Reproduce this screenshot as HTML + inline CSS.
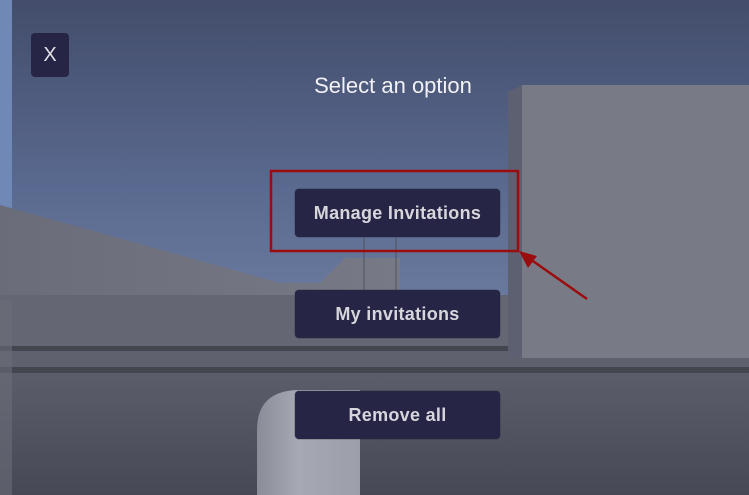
<!DOCTYPE html>
<html><head><style>
body{margin:0;width:749px;height:495px;overflow:hidden;position:relative;font-family:"Liberation Sans",sans-serif;background:#4f5878}
.a{position:absolute}
.btn{position:absolute;left:295px;width:205px;height:48px;background:#262545;border-radius:4px;color:#d6d6dc;font-weight:bold;font-size:18px;letter-spacing:0.3px;display:flex;align-items:center;justify-content:center;box-shadow:0 0 1px #111}
</style></head><body>
<svg class="a" style="left:0;top:0" width="749" height="495">
<defs>
<linearGradient id="sky" x1="0" y1="0" x2="0" y2="1"><stop offset="0" stop-color="#434d6b"/><stop offset="0.6" stop-color="#59688e"/><stop offset="1" stop-color="#6a7a9e"/></linearGradient>
<linearGradient id="low" x1="0" y1="0" x2="0" y2="1"><stop offset="0" stop-color="#5b5e6a"/><stop offset="1" stop-color="#464955"/></linearGradient>
<linearGradient id="wall" x1="0" y1="0" x2="1" y2="0"><stop offset="0" stop-color="#6a6d79"/><stop offset="1" stop-color="#777a86"/></linearGradient>
<linearGradient id="pil" x1="0" y1="0" x2="1" y2="0"><stop offset="0" stop-color="#8a8c98"/><stop offset="0.4" stop-color="#a6a8b3"/><stop offset="1" stop-color="#9c9eaa"/></linearGradient>
</defs>
<rect width="749" height="300" fill="url(#sky)"/>
<rect x="0" y="0" width="12" height="300" fill="#6f88b5"/>
<polygon points="0,205 280,283 320,283 345,258 400,258 400,300 0,315" fill="url(#wall)"/>
<rect x="0" y="295" width="749" height="55" fill="#646773"/>
<rect x="0" y="346" width="508" height="5" fill="#43464f"/>
<rect x="0" y="351" width="749" height="17" fill="#5f626e"/>
<rect x="0" y="367" width="749" height="6" fill="#43464f"/>
<rect x="0" y="373" width="749" height="122" fill="url(#low)"/>
<rect x="0" y="300" width="12" height="195" fill="#6a6c78" opacity="0.6"/>
<polygon points="508,92 522,85 522,358 508,358" fill="#5c6070"/>
<rect x="522" y="85" width="227" height="273" fill="#787b86"/>
<line x1="364" y1="238" x2="364" y2="290" stroke="#50535e"/>
<line x1="396" y1="238" x2="396" y2="290" stroke="#50535e"/>
<path d="M257,495 L257,430 Q257,390 300,390 L360,390 L360,495 Z" fill="url(#pil)"/>
<rect x="271" y="171" width="247" height="80" fill="none" stroke="#9a0c0e" stroke-width="2.5"/>
<line x1="587" y1="299" x2="530" y2="259" stroke="#9a0c0e" stroke-width="2.5"/>
<polygon points="519,251 537,256 528,268" fill="#9a0c0e"/>
</svg>
<div class="a" style="left:31px;top:33px;width:38px;height:44px;background:#262545;border-radius:4px;color:#e0e0e6;font-size:20px;display:flex;align-items:center;justify-content:center">X</div>
<div class="a" style="left:283px;top:73px;width:220px;text-align:center;color:#f2f2f6;font-size:22px">Select an option</div>
<div class="btn" style="top:189px">Manage Invitations</div>
<div class="btn" style="top:290px">My invitations</div>
<div class="btn" style="top:391px">Remove all</div>
</body></html>
